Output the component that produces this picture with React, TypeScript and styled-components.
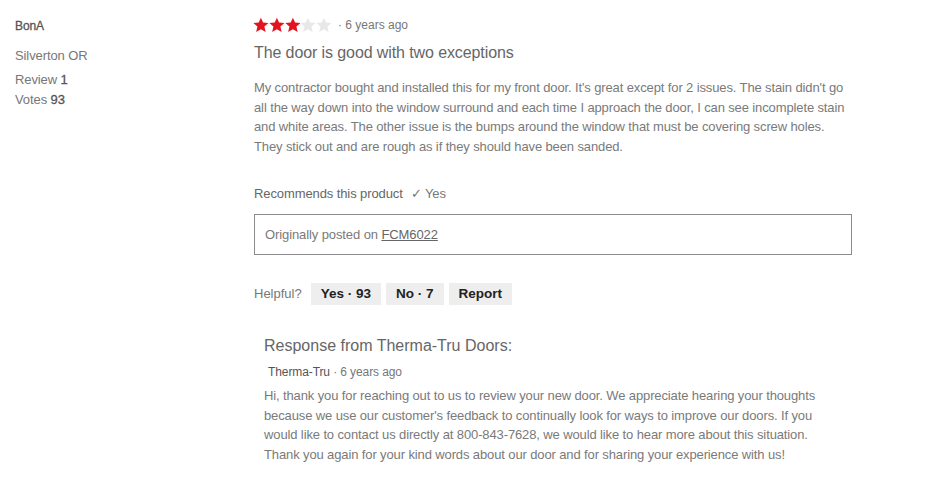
import React from "react";
import styled, { createGlobalStyle } from "styled-components";

const Global = createGlobalStyle`
  html, body { margin: 0; padding: 0; background: #fff; }
  body { font-family: "Liberation Sans", Arial, sans-serif; color: #666; }
`;

const Page = styled.div`
  display: grid;
  grid-template-columns: 239px 598px;
  padding: 16px 0 0 15px;
`;

const Profile = styled.div`
  display: flex;
  flex-direction: column;
  font-size: 13px;
  color: #777;
  letter-spacing: -0.1px;
`;

const Name = styled.div`
  font-size: 12px;
  color: #555;
  line-height: 18px;
  margin-top: 1px;
  margin-bottom: 12px;
  -webkit-text-stroke: 0.3px #555;
`;

const Location = styled.div`
  line-height: 18px;
  margin-bottom: 5px;
`;

const Stat = styled.div`
  line-height: 20px;
  b { font-weight: normal; color: #555; -webkit-text-stroke: 0.3px #555; }
`;

const Main = styled.div`
  display: flex;
  flex-direction: column;
`;

const Meta = styled.div`
  display: flex;
  align-items: center;
  gap: 6px;
  height: 18px;
  font-size: 12px;
  color: #777;
`;

const Stars = styled.div`
  display: flex;
  margin-left: -1px;
`;

const StarIcon = styled.svg<{ $on: boolean }>`
  width: 15.8px;
  height: 16px;
  fill: ${(p) => (p.$on ? "#e4121b" : "#e8e8e8")};
`;

const Title = styled.h3`
  margin: 8px 0 0;
  font-size: 16px;
  font-weight: normal;
  color: #666;
  line-height: 22px;
  letter-spacing: -0.1px;
`;

const Body = styled.p`
  margin: 14px 0 0;
  font-size: 13px;
  line-height: 19.7px;
  color: #7a7a7a;
  letter-spacing: -0.12px;
`;

const Recommend = styled.div`
  margin-top: 28px;
  font-size: 13px;
  color: #666;
  line-height: 18px;
  letter-spacing: -0.1px;
  span { color: #777; margin-left: 8px; }
`;

const Origin = styled.div`
  margin-top: 11px;
  border: 1px solid #8c8c8c;
  height: 39px;
  display: flex;
  align-items: center;
  padding: 0 10px;
  font-size: 13px;
  color: #7a7a7a;
  letter-spacing: -0.1px;
  a { color: #666; text-decoration: underline; }
`;

const Helpful = styled.div`
  margin-top: 28px;
  display: flex;
  align-items: center;
  gap: 5px;
  font-size: 13px;
  color: #777;
`;

const HelpLabel = styled.span`
  margin-right: 4px;
`;

const VoteButton = styled.button`
  border: none;
  background: #eee;
  font-family: "Liberation Sans", Arial, sans-serif;
  font-size: 13.5px;
  font-weight: bold;
  color: #222;
  height: 22px;
  padding: 0 10px;
  cursor: pointer;
`;

const Response = styled.div`
  margin-top: 30px;
  padding: 0 10px;
  display: flex;
  flex-direction: column;
`;

const RespTitle = styled.h4`
  margin: 0;
  font-size: 16px;
  font-weight: normal;
  color: #666;
  line-height: 22px;
`;

const RespMeta = styled.div`
  margin-top: 7px;
  font-size: 12px;
  color: #777;
  line-height: 16px;
  padding-left: 4px;
  letter-spacing: -0.1px;
  b { font-weight: normal; color: #555; }
`;

const RespBody = styled.p`
  margin: 6px 0 0;
  font-size: 13px;
  line-height: 19.7px;
  color: #7a7a7a;
  letter-spacing: -0.12px;
`;

const Star = ({ on }: { on: boolean }) => (
  <StarIcon $on={on} viewBox="0 0 24 24">
    <path d="M12 0.8l3.3 7.4 8.2.8-6.2 5.4 1.9 8.2L12 18.3l-7.2 4.3 1.9-8.2L0.5 9l8.2-.8z" />
  </StarIcon>
);

export default function App() {
  return (
    <>
      <Global />
      <Page>
        <Profile>
          <Name>BonA</Name>
          <Location>Silverton OR</Location>
          <Stat>Review <b>1</b></Stat>
          <Stat>Votes <b>93</b></Stat>
        </Profile>
        <Main>
          <Meta>
            <Stars>
              {[0, 1, 2, 3, 4].map((i) => (
                <Star key={i} on={i < 3} />
              ))}
            </Stars>
            <span>· 6 years ago</span>
          </Meta>
          <Title>The door is good with two exceptions</Title>
          <Body>
            My contractor bought and installed this for my front door. It's great except for 2 issues. The stain didn't go
            all the way down into the window surround and each time I approach the door, I can see incomplete stain
            and white areas. The other issue is the bumps around the window that must be covering screw holes.
            They stick out and are rough as if they should have been sanded.
          </Body>
          <Recommend>
            Recommends this product<span>✓ Yes</span>
          </Recommend>
          <Origin>
            Originally posted on&nbsp;<a href="#">FCM6022</a>
          </Origin>
          <Helpful>
            <HelpLabel>Helpful?</HelpLabel>
            <VoteButton>Yes · 93</VoteButton>
            <VoteButton>No · 7</VoteButton>
            <VoteButton>Report</VoteButton>
          </Helpful>
          <Response>
            <RespTitle>Response from Therma-Tru Doors:</RespTitle>
            <RespMeta>
              <b>Therma-Tru</b> · 6 years ago
            </RespMeta>
            <RespBody>
              Hi, thank you for reaching out to us to review your new door. We appreciate hearing your thoughts
              because we use our customer's feedback to continually look for ways to improve our doors. If you
              would like to contact us directly at 800-843-7628, we would like to hear more about this situation.
              Thank you again for your kind words about our door and for sharing your experience with us!
            </RespBody>
          </Response>
        </Main>
      </Page>
    </>
  );
}
